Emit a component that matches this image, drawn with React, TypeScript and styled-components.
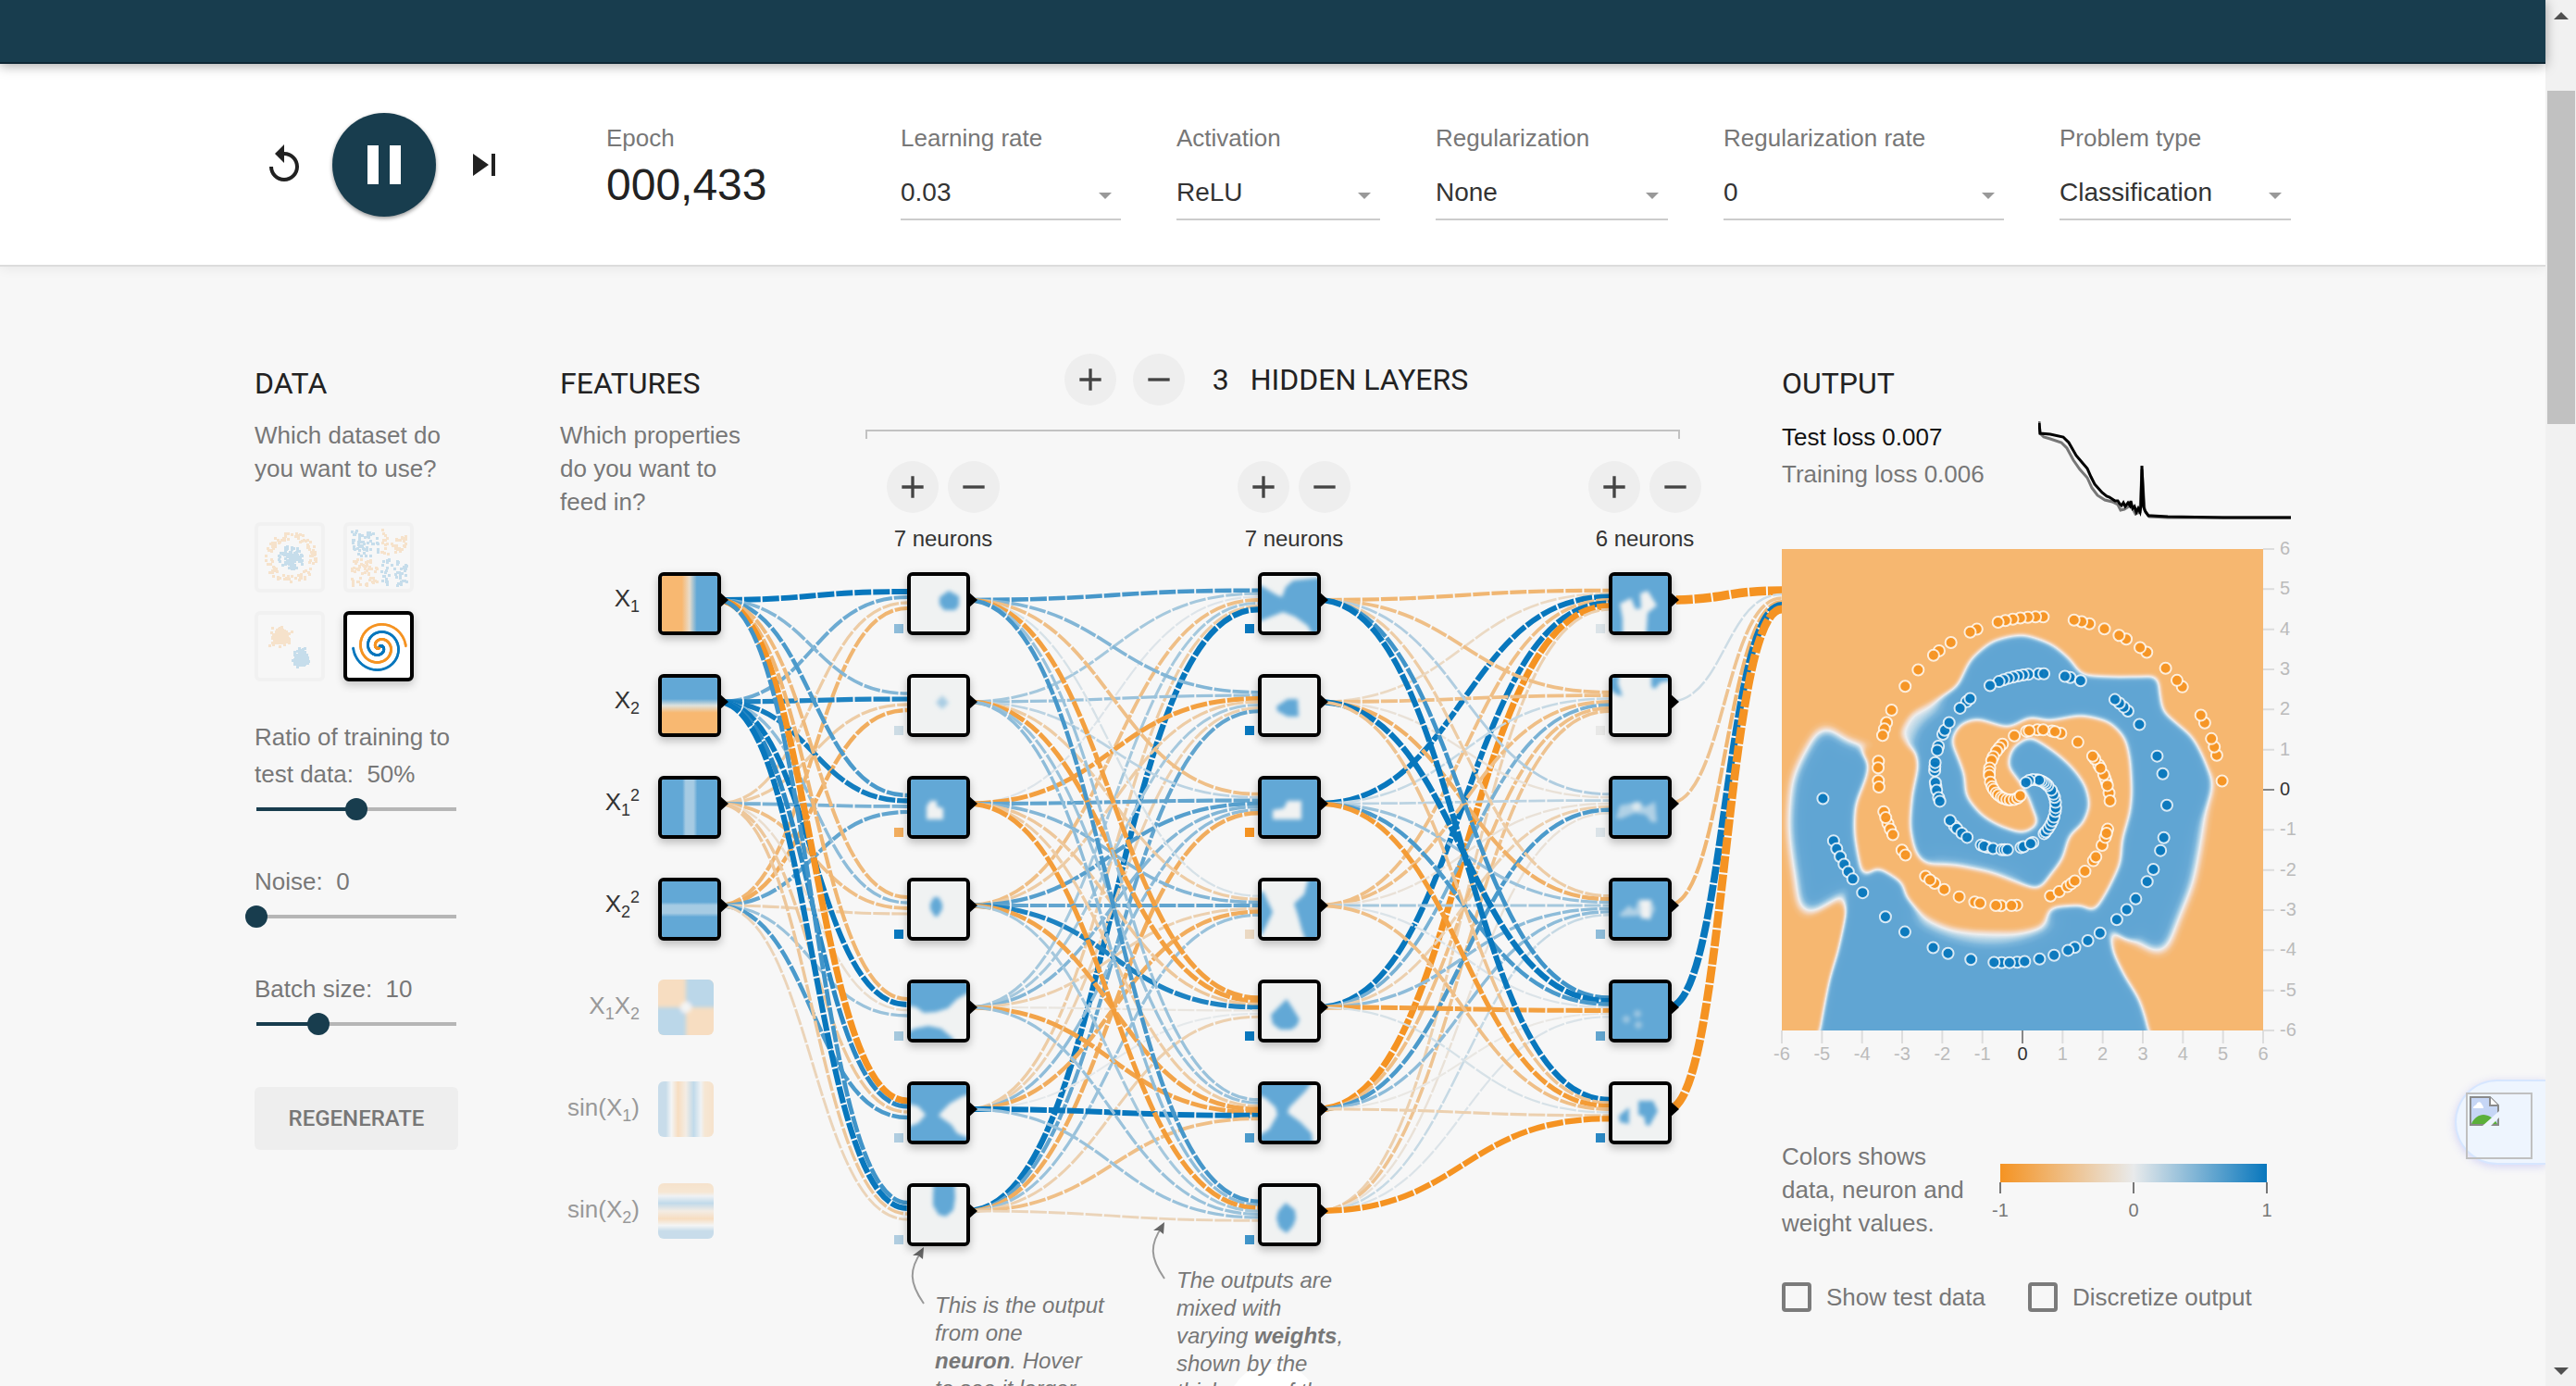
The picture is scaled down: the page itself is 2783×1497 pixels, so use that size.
import React, { useState } from "react";
import styled, { createGlobalStyle } from "styled-components";

const SANS = `"Liberation Sans", Arial, sans-serif`;
const DISPLAY = `Roboto, "Liberation Sans", sans-serif`;
const NAVY = "#183d4e";
const BLUE = "#0877bd";
const ORANGE = "#f59322";
const CELL_BLUE = "#62a8d6";
const CELL_ORANGE = "#f8b871";
const CELL_LIGHT = "#f0f2f2";

const GlobalStyle = createGlobalStyle`
  * { box-sizing: border-box; }
  body { margin: 0; background: #f7f7f7; font-family: ${SANS}; font-size: 26px; color: #222; }
  button, input, select { font: inherit; margin: 0; }
  h2, p { margin: 0; }
`;

/* ---------- page frame ---------- */

const Page = styled.div`
  position: relative;
  display: grid;
  grid-template-columns: minmax(0, 1fr) 33px;
  height: 100vh;
  overflow: hidden;
`;

const Content = styled.div`
  min-width: 0;
`;

const Banner = styled.header`
  position: relative;
  height: 69px;
  background: ${NAVY};
  border-bottom: 2px solid #0e2735;
  box-shadow: 0 2px 12px rgba(0, 0, 0, 0.35);
`;

const Container = styled.div`
  width: 100%;
  max-width: 2200px;
  margin: 0 auto;
`;

const ScrollTrack = styled.div`
  display: flex;
  flex-direction: column;
  align-items: center;
  background: #f1f1f1;
`;

const ScrollArrow = styled.div<{ $down?: boolean }>`
  display: flex;
  align-items: center;
  justify-content: center;
  height: 34px;
  svg {
    transform: ${(p) => (p.$down ? "none" : "rotate(180deg)")};
  }
`;

const ScrollRail = styled.div`
  flex: 1;
  width: 100%;
  padding: 64px 1px 0 2px;
`;

const ScrollThumb = styled.div`
  height: 360px;
  background: #c1c1c1;
`;

/* ---------- toolbar ---------- */

const Toolbar = styled.section`
  background: #fff;
  border-bottom: 2px solid #dcdcdc;
  box-shadow: 0 2px 12px rgba(0, 0, 0, 0.07);
`;

const ToolbarRow = styled(Container)`
  display: flex;
  align-items: flex-start;
  height: 217px;
  padding: 0 0 0 8px;
`;

const Playback = styled.div`
  display: flex;
  align-items: center;
  gap: 28px;
  height: 100%;
  margin-right: 108px;
`;

const IconButton = styled.button`
  width: 48px;
  height: 48px;
  padding: 0;
  border: 0;
  background: none;
  color: #212121;
  cursor: pointer;
  svg {
    display: block;
  }
`;

const PlayButton = styled.button`
  display: flex;
  align-items: center;
  justify-content: center;
  width: 112px;
  height: 112px;
  padding: 0;
  border: 0;
  border-radius: 50%;
  background: ${NAVY};
  color: #fff;
  box-shadow: 0 2px 4px rgba(0, 0, 0, 0.4);
  cursor: pointer;
`;

const Epoch = styled.div`
  display: flex;
  flex-direction: column;
  gap: 5px;
  padding-top: 62px;
`;

const Caption = styled.span`
  color: #777;
  line-height: 36px;
  white-space: nowrap;
`;

const EpochValue = styled.output`
  font-size: 48px;
  line-height: 56px;
  color: #222;
`;

const Selectors = styled.div`
  display: flex;
  gap: 60px;
  margin-left: auto;
  padding-top: 62px;
`;

const Field = styled.label<{ $width: number }>`
  position: relative;
  display: flex;
  flex-direction: column;
  gap: 25px;
  width: ${(p) => p.$width}px;
  &::after {
    content: "";
    position: absolute;
    right: 10px;
    bottom: 23px;
    border: 7px solid transparent;
    border-top-color: #999;
    border-bottom: 0;
    pointer-events: none;
  }
`;

const Select = styled.select`
  appearance: none;
  width: 100%;
  height: 46px;
  padding: 0 0 12px;
  border: 0;
  border-bottom: 2px solid #ccc;
  border-radius: 0;
  background: none;
  color: #333;
  font-size: 28px;
  line-height: 32px;
`;

/* ---------- main area ---------- */

const Main = styled.main`
  padding-top: 94px;
`;

const Columns = styled(Container)`
  display: flex;
  align-items: flex-start;
  justify-content: space-between;
`;

const NetworkAndOutput = styled.div`
  display: flex;
  align-items: flex-start;
`;

const Heading = styled.h2`
  font-family: ${DISPLAY};
  font-size: 32px;
  font-weight: 400;
  line-height: 40px;
  color: #222;
  white-space: nowrap;
`;

const Description = styled.p`
  margin-top: 18px;
  line-height: 36px;
  color: #777;
`;

const DataColumn = styled.section`
  width: 220px;
  padding-top: 12px;
`;

const Datasets = styled.div`
  display: grid;
  grid-template-columns: repeat(2, 76px);
  gap: 20px;
  margin: 40px 0;
`;

const DatasetButton = styled.button<{ $on: boolean }>`
  width: 76px;
  height: 76px;
  padding: 0;
  border: 4px solid ${(p) => (p.$on ? "#000" : "#f1f1f1")};
  border-radius: 6px;
  background: ${(p) => (p.$on ? "#fff" : "transparent")};
  box-shadow: ${(p) => (p.$on ? "0 4px 10px rgba(0,0,0,.2)" : "none")};
  cursor: pointer;
  svg {
    display: block;
    opacity: ${(p) => (p.$on ? 1 : 0.2)};
  }
`;

const SliderField = styled.label`
  display: flex;
  flex-direction: column;
  gap: 6px;
  margin-bottom: 46px;
  color: #777;
  line-height: 40px;
`;

const Slider = styled.input<{ $fill: number }>`
  appearance: none;
  width: 240px;
  height: 24px;
  margin: 0 -10px;
  background: none;
  &::-webkit-slider-runnable-track {
    height: 4px;
    background: linear-gradient(
      to right,
      transparent 12px,
      ${NAVY} 12px,
      ${NAVY} ${(p) => 12 + p.$fill * 216}px,
      #b6b6b6 ${(p) => 12 + p.$fill * 216}px,
      #b6b6b6 228px,
      transparent 228px
    );
  }
  &::-webkit-slider-thumb {
    appearance: none;
    width: 24px;
    height: 24px;
    margin-top: -10px;
    border-radius: 50%;
    background: ${NAVY};
  }
`;

const Regenerate = styled.button`
  width: 100%;
  height: 68px;
  margin-top: 10px;
  border: 0;
  border-radius: 6px;
  background: #eee;
  color: #777;
  font-family: ${DISPLAY};
  font-size: 24px;
  font-weight: 500;
  cursor: pointer;
`;

/* ---------- network ---------- */

const NetworkColumn = styled.section`
  width: 1320px;
`;

const NetworkHeader = styled.div`
  display: flex;
  align-items: flex-start;
  height: 236px;
`;

const FeaturesIntro = styled.div`
  width: 220px;
  margin-right: 110px;
  padding-top: 12px;
`;

const HiddenIntro = styled.div`
  width: 880px;
`;

const HiddenTitle = styled.div`
  display: flex;
  align-items: center;
  justify-content: center;
  gap: 18px;
  padding-right: 14px;
`;

const LayerCount = styled(Heading).attrs({ as: "span" })`
  margin: 0 5px 0 12px;
`;

const RoundButton = styled.button`
  display: flex;
  align-items: center;
  justify-content: center;
  width: 56px;
  height: 56px;
  padding: 0;
  border: 0;
  border-radius: 50%;
  background: #eee;
  color: #444;
  cursor: pointer;
`;

const Bracket = styled.div`
  height: 10px;
  margin-top: 26px;
  border: 2px solid #c2c2c2;
  border-bottom: 0;
`;

const LayerControls = styled.div`
  display: grid;
  grid-template-columns: repeat(3, 122px);
  gap: 257px;
  width: max-content;
  margin: 24px 0 0 23px;
`;

const LayerControl = styled.div`
  display: grid;
  grid-template-columns: 56px 56px;
  gap: 14px 10px;
  font-size: 24px;
  line-height: 28px;
  color: #333;
  span {
    grid-column: 1 / -1;
    text-align: center;
    white-space: nowrap;
  }
`;

const Diagram = styled.div`
  position: relative;
  height: 880px;
`;

const Links = styled.svg`
  position: absolute;
  inset: 0;
  width: 100%;
  height: 100%;
  overflow: visible;
`;

const NodeLayer = styled.div<{ $left: number }>`
  position: absolute;
  top: 0;
  left: ${(p) => p.$left}px;
  display: flex;
  flex-direction: column;
  gap: 42px;
`;

const NodeBox = styled.div<{ $on: boolean }>`
  flex: none;
  width: ${(p) => (p.$on ? 68 : 60)}px;
  height: ${(p) => (p.$on ? 68 : 60)}px;
  border: ${(p) => (p.$on ? "4px solid #000" : "0")};
  border-radius: 6px;
  overflow: hidden;
  background: ${CELL_LIGHT};
  opacity: ${(p) => (p.$on ? 1 : 0.4)};
  box-shadow: ${(p) => (p.$on ? "0 4px 10px rgba(0,0,0,.25)" : "none")};
  svg {
    display: block;
  }
`;

const FeatureRow = styled.div`
  display: flex;
  align-items: flex-start;
  gap: 20px;
  height: 68px;
`;

const FeatureLabel = styled.span<{ $on: boolean }>`
  width: 86px;
  line-height: 56px;
  text-align: right;
  white-space: nowrap;
  color: ${(p) => (p.$on ? "#333" : "#999")};
  sub,
  sup {
    font-size: 18px;
    line-height: 0;
  }
`;

const Callout = styled.p<{ $x: number; $y: number }>`
  position: absolute;
  left: ${(p) => p.$x}px;
  top: ${(p) => p.$y}px;
  width: 183px;
  font-size: 24px;
  font-style: italic;
  line-height: 30px;
  color: #777;
`;

/* ---------- output ---------- */

const OutputColumn = styled.section`
  width: 550px;
  padding-top: 12px;
`;

const LossRow = styled.div`
  display: flex;
  justify-content: space-between;
  height: 141px;
  margin-top: 18px;
  line-height: 40px;
`;

const Loss = styled.div<{ $color: string }>`
  color: ${(p) => p.$color};
  white-space: nowrap;
`;

const Heatmap = styled.svg`
  display: block;
  overflow: visible;
`;

const LegendRow = styled.div`
  display: flex;
  align-items: flex-start;
  gap: 26px;
  margin-top: 78px;
`;

const LegendText = styled.p`
  width: 210px;
  line-height: 36px;
  color: #777;
`;

const LegendScale = styled.svg`
  display: block;
  margin-top: 26px;
  overflow: visible;
`;

const Options = styled.div`
  display: flex;
  gap: 46px;
  margin-top: 44px;
`;

const Option = styled.label`
  display: flex;
  align-items: center;
  gap: 16px;
  line-height: 36px;
  color: #777;
  white-space: nowrap;
`;

const Checkbox = styled.input`
  appearance: none;
  width: 32px;
  height: 32px;
  border: 4px solid #7b7b7b;
  border-radius: 4px;
`;

const Widget = styled.button`
  position: absolute;
  right: 33px;
  top: 1166px;
  width: 98px;
  height: 92px;
  padding: 8px 0 0 10px;
  border: 2px solid #d6e6ff;
  border-right: 0;
  border-radius: 46px 0 0 46px;
  background: #eef5fe;
  box-shadow: 0 2px 10px rgba(90, 90, 240, 0.22);
  clip-path: inset(-20px 0 -20px -20px);
`;

const BrokenImage = styled.span`
  display: block;
  width: 72px;
  height: 72px;
  padding: 2px;
  border: 2px solid #c0c0c0;
  svg {
    display: block;
  }
`;

/* ---------- data ---------- */

const PITCH = 110;
const LAYER_X = [106, 375, 754, 1133];
const OUTPUT_X = 1320;

// weights[layer][target][source]
const WEIGHTS: number[][][] = [
  [
    [1.1, 0.55, -0.35, -0.6],
    [0.45, 0.9, -0.35, -0.7],
    [0.7, 0.95, 0.5, 0.6],
    [-0.55, 0.4, -0.5, -0.3],
    [-0.6, 1.05, -0.15, 0.35],
    [-1.4, 0.85, -0.4, 0.7],
    [0.75, 1.15, -0.4, -0.25],
  ],
  [
    [0.72, 0.3, 0.05, -0.5, 0.3, -0.35, 1.2],
    [0.45, 0.35, -0.85, -0.35, 0.3, -0.3, 0.6],
    [-0.5, 0.2, 0.6, 0.65, 0.45, 0.4, -0.7],
    [0.08, -0.35, 0.45, 0.6, -0.3, -0.7, 0.35],
    [-0.85, -0.85, -0.4, 0.9, -0.06, 0.02, -0.3],
    [0.35, 0.35, -0.35, -0.8, -0.8, 1.1, -0.5],
    [0.72, 0.4, -0.88, 0.3, 0.35, 0.35, -0.25],
  ],
  [
    [-0.6, -0.2, 1.1, -0.5, 1.15, -1.4, -0.3],
    [-0.5, -0.5, 0.15, -0.5, 0.5, -0.5, -0.45],
    [0.25, -0.1, 0.2, -0.1, -0.3, 0.7, -0.1],
    [-0.35, -0.65, 0.35, 0.3, 0.4, 0.4, 0.15],
    [0.75, 1.2, 0.7, 0.06, -0.85, -0.04, 0.06],
    [1.15, -0.45, -0.9, -0.5, 0.08, -0.3, -1.2],
  ],
  [[-2.1, 0.12, -0.45, -0.6, 1.6, -1.9]],
];

const BIASES: number[][] = [
  [0.4, 0.12, -0.7, 1, 0.3, 0.25, 0.25],
  [1, 1, -1, -0.2, 1, 0.7, 0.75],
  [0.06, -0.02, 0.06, 0.4, 0.6, 0.85],
];

const rgb = (hex: string) => [1, 3, 5].map((i) => parseInt(hex.slice(i, i + 2), 16));
const weightColor = (w: number) => {
  const t = Math.min(1, Math.abs(w));
  const from = rgb("#e8eaeb");
  const to = rgb(w < 0 ? ORANGE : BLUE);
  return `rgb(${from.map((v, i) => Math.round(v + (to[i] - v) * t)).join(",")})`;
};

const BLUE_POINTS = [
  249, 244, 243, 242, 241, 240, 239, 237, 233, 230, 226, 224, 221, 217, 215, 218, 216, 214, 212, 210, 207, 208, 205,
  203, 200, 198, 196, 193, 191, 188, 186, 181, 176, 173, 167, 164, 163, 162, 161, 152, 154, 151, 146, 147, 144, 143,
  142, 141, 140, 139, 138, 136, 130, 131, 128, 121, 122, 124, 118, 117, 112, 113, 114, 108, 109, 107, 105, 104, 96, 98,
  95, 93, 91, 86, 84, 85, 82, 79, 78, 77, 72, 71, 67, 68, 61, 60, 58, 56, 54, 52, 49, 47, 44, 41, 39, 36, 32, 30, 28,
  26, 22, 18, 24, 14, 10,
];
const ORANGE_POINTS = [
  249, 246, 245, 244, 242, 241, 237, 236, 234, 231, 230, 228, 227, 225, 223, 222, 221, 217, 216, 215, 214, 213, 212,
  211, 208, 207, 204, 202, 201, 198, 195, 191, 189, 188, 187, 183, 182, 180, 179, 175, 173, 174, 172, 171, 168, 167,
  162, 160, 161, 158, 155, 152, 151, 147, 148, 144, 145, 137, 135, 133, 132, 131, 128, 125, 124, 121, 119, 117, 118,
  108, 110, 105, 104, 106, 103, 100, 101, 98, 97, 91, 85, 82, 83, 77, 79, 73, 74, 68, 62, 60, 58, 55, 53, 49, 47, 45,
  41, 38, 36, 33, 31, 28, 26, 23, 20, 16, 12, 8,
];

const spiral = (i: number, turn: number, unit: number, centre: number) => {
  const r = (i / 250) * 5 * unit;
  const t = (i / 250) * 3.5 * Math.PI + turn;
  return [centre + r * Math.sin(t), centre - r * Math.cos(t)];
};

// Closed Catmull-Rom curve through the given points.
const smooth = (pts: number[][]) => {
  const n = pts.length;
  const at = (i: number) => pts[(i + n) % n];
  let d = `M${pts[0].join(",")}`;
  for (let i = 0; i < n; i++) {
    const [a, b, c, e] = [at(i - 1), at(i), at(i + 1), at(i + 2)];
    d += `C${b[0] + (c[0] - a[0]) / 8},${b[1] + (c[1] - a[1]) / 8} ${c[0] - (e[0] - b[0]) / 8},${c[1] - (e[1] - b[1]) / 8} ${c[0]},${c[1]}`;
  }
  return d + "Z";
};

// Upper arm, core and the wedge that runs off the bottom edge.
const BODY = [
  [134, 219], [128, 200], [140, 178], [165, 163], [189, 148], [204, 120], [228, 100], [260, 93], [291, 103],
  [311, 119], [325, 135], [355, 138], [386, 138], [405, 139], [409, 160], [414, 177], [442, 202], [456, 227],
  [461, 250], [454, 276], [440, 300], [426, 330], [412, 360], [396, 390], [380, 419], [356, 410], [358, 434],
  [370, 460], [386, 487], [396, 520], [404, 580], [32, 580], [41, 520], [50, 467], [60, 434], [67, 400], [70, 370],
  [84, 344], [120, 300],
];
const LEFT_ARM = [
  [45, 192], [72, 208], [97, 217], [110, 260], [110, 330], [88, 366], [62, 376], [24, 394], [14, 350], [8, 300],
  [12, 250], [26, 218],
];
const RIGHT_ARM = [
  [400, 240], [462, 246], [458, 280], [452, 320], [444, 360], [430, 396], [412, 436], [384, 424], [354, 406], [380, 340],
];
const SPIRAL = [
  [88, 215], [94, 232], [91, 247], [80, 277], [79, 310], [88, 351], [104, 345], [129, 360], [135, 376], [153, 394],
  [181, 407], [212, 412], [252, 412], [280, 405], [291, 388], [323, 385], [337, 390], [351, 370], [365, 340],
  [368, 314], [376, 284], [378, 260], [376, 227], [370, 204], [353, 187], [323, 180], [290, 185], [268, 182],
  [244, 192], [212, 184], [193, 190], [184, 207], [191, 227], [197, 244], [200, 267], [216, 287], [236, 299],
  [260, 306], [276, 297], [272, 283], [266, 267], [256, 250], [245, 234], [250, 215], [268, 204], [287, 214],
  [303, 226], [317, 240], [328, 257], [332, 277], [325, 296], [311, 310], [303, 334], [290, 352], [277, 366],
  [252, 360], [224, 350], [189, 343], [157, 340], [145, 327], [139, 300], [141, 267], [147, 234], [141, 217],
  [118, 214],
];
const toPath = (pts: number[][], close = false) => "M" + pts.map((p) => p.join(",")).join("L") + (close ? "Z" : "");

const TEST_LOSS: number[][] = [
  [1, 5], [2, 16], [13, 17], [27, 20], [33, 26], [41, 40], [47, 47], [53, 54], [57, 63], [61, 71], [69, 80], [74, 84],
  [77, 85], [83, 89], [86, 89], [88, 92], [90, 94], [92, 91], [94, 95], [97, 91], [99, 94], [100, 89], [102, 97],
  [104, 95], [106, 101], [108, 97], [110, 101], [111, 94], [112, 51], [114, 96], [116, 101], [119, 105], [122, 105],
  [140, 106], [200, 107], [273, 107],
];
const TRAIN_LOSS: number[][] = [
  [1, 3], [2, 16], [6, 20], [13, 22], [25, 26], [31, 32], [38, 45], [45, 55], [53, 64], [58, 75], [64, 83], [72, 88],
  [80, 90], [86, 93], [89, 99], [93, 98], [98, 95], [101, 95], [105, 103], [110, 101], [112, 55], [115, 99], [120, 106],
  [140, 107], [200, 107], [273, 107],
];

const makeRandom = (seed: number) => () => {
  seed = (seed * 16807) % 2147483647;
  return seed / 2147483647;
};

type Dot = [number, number, string];
const datasetDots: Record<string, Dot[]> = (() => {
  const rnd = makeRandom(4321);
  const gauss = () => rnd() + rnd() + rnd() + rnd() - 2;
  const circle: Dot[] = [];
  const xor: Dot[] = [];
  const clusters: Dot[] = [];
  const spirals: Dot[] = [];
  for (let i = 0; i < 110; i++) {
    const a = rnd() * Math.PI * 2;
    const r = 20 + rnd() * 8;
    circle.push([34 + r * Math.sin(a), 33 + r * Math.cos(a), ORANGE]);
    const b = rnd() * Math.PI * 2;
    const q = rnd() * 14;
    circle.push([34 + q * Math.sin(b), 33 + q * Math.cos(b), BLUE]);
  }
  for (let i = 0; i < 200; i++) {
    const x = (rnd() * 28 + 2) * (rnd() < 0.5 ? -1 : 1);
    const y = (rnd() * 28 + 2) * (rnd() < 0.5 ? -1 : 1);
    xor.push([34 + x, 33 + y, x * y > 0 ? BLUE : ORANGE]);
  }
  for (let i = 0; i < 200; i++) {
    clusters.push([23 + gauss() * 7, 22 + gauss() * 7, ORANGE]);
    clusters.push([45 + gauss() * 6, 46 + gauss() * 7, BLUE]);
  }
  for (let i = 0; i < 250; i++) {
    const [bx, by] = spiral(i, 0, 5.7, 35);
    const [ox, oy] = spiral(i, Math.PI, 5.7, 35);
    spirals.push([bx, by, BLUE], [ox, oy, ORANGE]);
  }
  return { Circle: circle, "Exclusive or": xor, Gaussian: clusters, Spiral: spirals };
})();

/* ---------- drawings ---------- */

const Glyph = ({ size, d }: { size: number; d: string }) => (
  <svg width={size} height={size} viewBox="0 0 24 24" fill="currentColor" aria-hidden="true">
    <path d={d} />
  </svg>
);
const ICONS = {
  replay: "M12 5V1L7 6l5 5V7c3.31 0 6 2.69 6 6s-2.69 6-6 6-6-2.69-6-6H4c0 4.42 3.58 8 8 8s8-3.58 8-8-3.58-8-8-8z",
  pause: "M6 19h4V5H6v14zm8-14v14h4V5h-4z",
  next: "M6 18l8.5-6L6 6v12zM16 6v12h2V6h-2z",
  add: "M19 13h-6v6h-2v-6H5v-2h6V5h2v6h6v2z",
  remove: "M19 13H5v-2h14v2z",
};

const DefsHolder = styled.svg`
  position: absolute;
  width: 0;
  height: 0;
`;

const MapBlur = ({ id, amount }: { id: string; amount: number }) => (
  <filter id={id} filterUnits="userSpaceOnUse" x="-60" y="-60" width="640" height="700">
    <feGaussianBlur stdDeviation={amount} />
  </filter>
);

const SharedDefs = () => (
  <DefsHolder aria-hidden="true">
    <defs>
      <filter id="soft" filterUnits="userSpaceOnUse" x="-12" y="-12" width="84" height="84">
        <feGaussianBlur stdDeviation="2" />
      </filter>
      <MapBlur id="edge" amount={5} />
      <MapBlur id="inner-edge" amount={5} />
      <MapBlur id="haze" amount={9} />
      <filter
        id="ramp"
        filterUnits="userSpaceOnUse"
        x="0"
        y="0"
        width="520"
        height="520"
        colorInterpolationFilters="sRGB"
      >
        <feComponentTransfer>
          <feFuncR type="table" tableValues="0.965 0.965 0.962 0.958 0.93 0.68 0.48 0.4 0.38" />
          <feFuncG type="table" tableValues="0.718 0.72 0.75 0.83 0.935 0.82 0.71 0.66 0.65" />
          <feFuncB type="table" tableValues="0.44 0.445 0.52 0.72 0.94 0.9 0.86 0.835 0.83" />
        </feComponentTransfer>
      </filter>
    </defs>
  </DefsHolder>
);

const Cell = ({ blue, children }: { blue?: boolean; children: React.ReactNode }) => (
  <svg width="60" height="60" viewBox="0 0 60 60">
    <rect width="60" height="60" fill={blue ? CELL_BLUE : CELL_LIGHT} />
    <g filter="url(#soft)" fill={blue ? CELL_LIGHT : CELL_BLUE}>
      {children}
    </g>
  </svg>
);

const HIDDEN_CELLS: React.ReactNode[][] = [
  [
    <Cell><path d="M41 16L52 22 52 32 48 37 36 37 31 31 31 23Z" /></Cell>,
    <Cell><path d="M34 19L41 27 34 34 27 27Z" opacity=".5" /></Cell>,
    <Cell blue><path d="M17 29L21 23 28 23 28 29 35 31V43H17Z" /></Cell>,
    <Cell><path d="M25 17H30L34 24 34 30 29 38H26L21 30V24Z" /></Cell>,
    <Cell><path d="M-9 -9H70V6L50 17 40 27 27 31 14 32 6 26 -9 23ZM-9 56L4 49 19 46 33 49 46 60 46 70H-9Z" /></Cell>,
    <Cell blue><path d="M-9 16L0 21 8 23 16 32 8 41 0 44 -9 48ZM70 8L56 12 42 20 33 29 30 33 44 43 50 52 70 60Z" /></Cell>,
    <Cell><path d="M25 -9H47L48 12 46 25 38 32 30 30 24 20 24 10Z" /></Cell>,
  ],
  [
    <Cell><path d="M-9 8L2 12 15 20 22 23 26 12 34 5 70 1V70H58L50 54 36 44 23 39 8 45 -9 52Z" /></Cell>,
    <Cell><path d="M28 23H39L40 42H28L17 36 16 31Z" /></Cell>,
    <Cell blue><path d="M12 33L24 31 28 23H43V43H12Z" /></Cell>,
    <Cell><path d="M-9 11H2L7 22 12 33 6 46 0 58 -9 60ZM52 -9L46 14 35 24 39 36 44 54 50 70H70V-9Z" /></Cell>,
    <Cell><path d="M27 17L33 26 41 39 38 46 32 50 20 50 12 44 10 34 18 26Z" /></Cell>,
    <Cell blue><path d="M-9 8L4 14 15 24 17 32 8 48 -9 58ZM70 -9H58L48 6 30 24 28 30 42 40 54 52 56 70H70Z" /></Cell>,
    <Cell><path d="M26 17L36 25 37 34 34 42 27 50 19 44 16 34 18 26Z" /></Cell>,
  ],
  [
    <Cell blue><path d="M11 70L11 46 8 30 20 24 25 36 31 35 30 19 38 16 48 32 38 40 36 70Z" /></Cell>,
    <Cell><path d="M-9 -9H8L6 6 11 20 4 18 -9 8ZM42 -9V10L46 12 52 5 70 2V-9Z" /></Cell>,
    <Cell blue>
      <path d="M4 42L8 28 30 24 34 30 46 24 48 46 42 46 36 38 24 36 10 42Z" opacity=".55" />
      <circle cx="26" cy="29" r="5" opacity=".7" />
    </Cell>,
    <Cell blue>
      <path d="M7 36L18 26 24 31 28 20H42L46 30 40 42 30 37 10 38Z" opacity=".55" />
      <path d="M30 20H41V40H31Z" />
    </Cell>,
    <Cell blue><g opacity=".4"><circle cx="15" cy="39" r="4" /><circle cx="27" cy="33" r="4" /><circle cx="28" cy="45" r="4" /></g></Cell>,
    <Cell><path d="M18 24V42L8 40 7 33ZM28 17H44L49 28 40 44 36 43 34 34 28 32Z" /></Cell>,
  ],
];

const SIN_STOPS: [number, string][] = [
  [0, "#84b6d8"], [0.14, "#84b6d8"], [0.24, "#f0f2f2"], [0.36, CELL_ORANGE], [0.5, "#f0ddc8"], [0.64, "#72b0d8"],
  [0.77, "#e4ebf0"], [0.84, "#f6d0a2"], [1, "#f6c48c"],
];

const Gradient = ({ id, vertical, stops }: { id: string; vertical?: boolean; stops: [number, string][] }) => (
  <svg width="60" height="60" viewBox="0 0 60 60">
    <defs>
      <linearGradient id={id} x1="0" y1="0" x2={vertical ? 0 : 1} y2={vertical ? 1 : 0}>
        {stops.map(([o, c], i) => (
          <stop key={i} offset={o} stopColor={c} />
        ))}
      </linearGradient>
    </defs>
    <rect width="60" height="60" fill={`url(#${id})`} />
  </svg>
);

const BAND: [number, string][] = [[0.37, CELL_BLUE], [0.43, "#a6cbe3"], [0.57, "#a6cbe3"], [0.64, CELL_BLUE]];

const FEATURES: { name: string; on: boolean; label: React.ReactNode; cell: React.ReactNode }[] = [
  {
    name: "x1", on: true, label: <>X<sub>1</sub></>,
    cell: <Gradient id="f-x1" stops={[[0.36, CELL_ORANGE], [0.5, "#e8dccb"], [0.63, CELL_BLUE]]} />,
  },
  {
    name: "x2", on: true, label: <>X<sub>2</sub></>,
    cell: <Gradient id="f-x2" vertical stops={[[0.38, CELL_BLUE], [0.5, "#dfe2dd"], [0.63, CELL_ORANGE]]} />,
  },
  { name: "x1sq", on: true, label: <>X<sub>1</sub><sup>2</sup></>, cell: <Gradient id="f-x1sq" stops={BAND} /> },
  { name: "x2sq", on: true, label: <>X<sub>2</sub><sup>2</sup></>, cell: <Gradient id="f-x2sq" vertical stops={BAND} /> },
  {
    name: "x1x2", on: false, label: <>X<sub>1</sub>X<sub>2</sub></>,
    cell: (
      <svg width="60" height="60" viewBox="0 0 60 60">
        <rect width="60" height="60" fill={CELL_ORANGE} />
        <g filter="url(#soft)">
          <path d="M30 -9H70V30H30ZM-9 30H30V70H-9Z" fill={CELL_BLUE} />
          <circle cx="30" cy="30" r="6" fill={CELL_LIGHT} />
        </g>
      </svg>
    ),
  },
  { name: "sin1", on: false, label: <>sin(X<sub>1</sub>)</>, cell: <Gradient id="f-sin1" stops={SIN_STOPS} /> },
  {
    name: "sin2", on: false, label: <>sin(X<sub>2</sub>)</>,
    cell: <Gradient id="f-sin2" vertical stops={SIN_STOPS.map(([o, c]) => [1 - o, c] as [number, string]).reverse()} />,
  },
];

const NetworkLinks = () => (
  <Links aria-hidden="true">
    {WEIGHTS.map((targets, layer) =>
      targets.map((sources, t) =>
        sources.map((w, s) => {
          const x1 = LAYER_X[layer] + 64;
          const y1 = 30 + s * PITCH;
          const x2 = layer === 3 ? OUTPUT_X : LAYER_X[layer + 1];
          const y2 = 30 + t * PITCH + ((s - (sources.length - 1) / 2) / sources.length) * 24;
          const mid = (x1 + x2) / 2;
          return (
            <path
              key={`${layer}-${t}-${s}`}
              d={`M${x1},${y1}C${mid},${y1} ${mid},${y2} ${x2},${y2}`}
              fill="none"
              stroke={weightColor(w)}
              strokeWidth={2 + 3.6 * Math.abs(w)}
              strokeDasharray="18 2"
              strokeDashoffset={-8.67}
            />
          );
        })
      )
    )}
    {BIASES.map((layer, l) =>
      layer.map((b, i) => (
        <rect key={`${l}-${i}`} x={LAYER_X[l + 1] - 14} y={56 + i * PITCH} width="10" height="10" fill={weightColor(b)} />
      ))
    )}
    {[4, 7, 7, 6].map((count, l) =>
      Array.from({ length: count }, (_, i) => {
        const x = LAYER_X[l] + 66;
        const y = 30 + i * PITCH;
        return <path key={`${l}-${i}`} d={`M${x},${y - 9}L${x + 10},${y}L${x},${y + 9}Z`} />;
      })
    )}
    <circle cx="771" cy="905" r="50" fill="#fff" />
    {[[381, 729], [641, 702]].map(([x, y]) => (
      <g key={x} transform={`translate(${x - 12} ${y})`}>
        <path d="M24,61C8,38 8,24 22,4" fill="none" stroke="#999" strokeWidth="2" />
        <path d="M24,0L23,13L18,9L12,9Z" fill="#666" />
      </g>
    ))}
  </Links>
);

const AXIS = [-6, -5, -4, -3, -2, -1, 0, 1, 2, 3, 4, 5, 6];

const OutputMap = () => (
  <Heatmap width="520" height="560" viewBox="0 0 520 560" role="img" aria-label="Network output">
    <svg width="520" height="520">
      <g filter="url(#ramp)">
        <rect width="520" height="520" fill="#000" />
        <path d={smooth(LEFT_ARM)} fill="#fff" filter="url(#haze)" />
        <path d={smooth(RIGHT_ARM)} fill="#fff" filter="url(#haze)" />
        <path d={smooth(BODY)} fill="#fff" filter="url(#edge)" />
        <path d="M30,405L67,385L56,430L34,520L-20,520L-20,430Z" fill="#000" filter="url(#inner-edge)" />
        <path d={smooth(SPIRAL)} fill="#000" filter="url(#inner-edge)" />
        <g filter="url(#haze)" fill="none" stroke="#000" strokeLinecap="round">
          <path d="M150,396C200,426 250,424 286,402" strokeWidth="14" strokeOpacity=".7" />
          <path d="M134,216C130,196 144,180 168,166" strokeWidth="14" strokeOpacity=".7" />
          <path d="M160,338C200,340 230,348 256,360" strokeWidth="8" strokeOpacity=".6" />
        </g>
      </g>
    </svg>
    <g stroke="#fff" strokeOpacity=".8" strokeWidth="2" fillOpacity=".95">
      {ORANGE_POINTS.map((i) => {
        const [x, y] = spiral(i, Math.PI, 43.333, 260);
        return <circle key={`o${i}`} cx={x} cy={y} r="6" fill={ORANGE} />;
      })}
      {BLUE_POINTS.map((i) => {
        const [x, y] = spiral(i, 0, 43.333, 260);
        return <circle key={`b${i}`} cx={x} cy={y} r="6" fill={BLUE} />;
      })}
    </g>
    <g fontFamily={SANS} fontSize="20">
      {AXIS.map((v) => {
        const p = ((v + 6) / 12) * 520;
        const fill = v === 0 ? "#333" : "#bbb";
        const stroke = v === 0 ? "#888" : "#ddd";
        return (
          <g key={v} fill={fill} stroke="none">
            <path d={`M${p},520v14M520,${520 - p}h12`} stroke={stroke} strokeWidth="2" />
            <text x={p} y="552" textAnchor="middle">{v}</text>
            <text x="538" y={526 - p}>{v}</text>
          </g>
        );
      })}
    </g>
  </Heatmap>
);

/* ---------- page ---------- */

const SELECTS = [
  { label: "Learning rate", value: "0.03", width: 238 },
  { label: "Activation", value: "ReLU", width: 220 },
  { label: "Regularization", value: "None", width: 251 },
  { label: "Regularization rate", value: "0", width: 303 },
  { label: "Problem type", value: "Classification", width: 250 },
];

const PlusMinus = ({ what }: { what: string }) => (
  <>
    <RoundButton aria-label={`Add ${what}`}><Glyph size={40} d={ICONS.add} /></RoundButton>
    <RoundButton aria-label={`Remove ${what}`}><Glyph size={40} d={ICONS.remove} /></RoundButton>
  </>
);

const RangeControl = ({ label, unit = "", min, max, initial }: {
  label: string; unit?: string; min: number; max: number; initial: number;
}) => {
  const [value, setValue] = useState(initial);
  return (
    <SliderField>
      {`${label}:\u00a0 ${value}${unit}`}
      <Slider
        type="range"
        min={min}
        max={max}
        value={value}
        $fill={(value - min) / (max - min)}
        onChange={(e) => setValue(Number(e.target.value))}
      />
    </SliderField>
  );
};

export default function App() {
  const [dataset, setDataset] = useState("Spiral");
  return (
    <Page>
      <GlobalStyle />
      <SharedDefs />
      <Content>
        <Banner />
        <Toolbar>
          <ToolbarRow>
            <Playback>
              <IconButton aria-label="Reset"><Glyph size={48} d={ICONS.replay} /></IconButton>
              <PlayButton aria-label="Pause"><Glyph size={72} d={ICONS.pause} /></PlayButton>
              <IconButton aria-label="Step"><Glyph size={48} d={ICONS.next} /></IconButton>
            </Playback>
            <Epoch>
              <Caption>Epoch</Caption>
              <EpochValue>000,433</EpochValue>
            </Epoch>
            <Selectors>
              {SELECTS.map((s) => (
                <Field key={s.label} $width={s.width}>
                  <Caption>{s.label}</Caption>
                  <Select defaultValue={s.value}>
                    <option>{s.value}</option>
                  </Select>
                </Field>
              ))}
            </Selectors>
          </ToolbarRow>
        </Toolbar>

        <Main>
          <Columns>
            <DataColumn>
              <Heading>DATA</Heading>
              <Description>Which dataset do you want to use?</Description>
              <Datasets>
                {Object.entries(datasetDots).map(([name, dots]) => (
                  <DatasetButton key={name} aria-label={name} $on={name === dataset} onClick={() => setDataset(name)}>
                    <svg width="68" height="68" viewBox="0 0 68 68">
                      {dots.map(([x, y, fill], i) =>
                        name === "Spiral" ? (
                          <circle key={i} cx={x} cy={y} r="1.4" fill={fill} />
                        ) : (
                          <rect key={i} x={Math.round(x)} y={Math.round(y)} width="3" height="3" fill={fill} />
                        )
                      )}
                    </svg>
                  </DatasetButton>
                ))}
              </Datasets>
              <RangeControl label="Ratio of training to test data" unit="%" min={10} max={90} initial={50} />
              <RangeControl label="Noise" min={0} max={50} initial={0} />
              <RangeControl label="Batch size" min={1} max={30} initial={10} />
              <Regenerate>REGENERATE</Regenerate>
            </DataColumn>

            <NetworkAndOutput>
              <NetworkColumn>
                <NetworkHeader>
                  <FeaturesIntro>
                    <Heading>FEATURES</Heading>
                    <Description>Which properties do you want to feed in?</Description>
                  </FeaturesIntro>
                  <HiddenIntro>
                    <HiddenTitle>
                      <PlusMinus what="layer" />
                      <LayerCount>3</LayerCount>
                      <Heading>HIDDEN LAYERS</Heading>
                    </HiddenTitle>
                    <Bracket />
                    <LayerControls>
                      {[7, 7, 6].map((n, i) => (
                        <LayerControl key={i}>
                          <PlusMinus what="neuron" />
                          <span>{`${n} neurons`}</span>
                        </LayerControl>
                      ))}
                    </LayerControls>
                  </HiddenIntro>
                </NetworkHeader>
                <Diagram>
                  <NetworkLinks />
                  <NodeLayer $left={0}>
                    {FEATURES.map((f) => (
                      <FeatureRow key={f.name}>
                        <FeatureLabel $on={f.on}>{f.label}</FeatureLabel>
                        <NodeBox $on={f.on}>{f.cell}</NodeBox>
                      </FeatureRow>
                    ))}
                  </NodeLayer>
                  {HIDDEN_CELLS.map((cells, l) => (
                    <NodeLayer key={l} $left={LAYER_X[l + 1]}>
                      {cells.map((cell, i) => (
                        <NodeBox key={i} $on>{cell}</NodeBox>
                      ))}
                    </NodeLayer>
                  ))}
                  <Callout $x={405} $y={777}>
                    This is the output from one <b>neuron</b>. Hover to see it larger.
                  </Callout>
                  <Callout $x={666} $y={750}>
                    The outputs are mixed with varying <b>weights</b>, shown by the thickness of the lines.
                  </Callout>
                </Diagram>
              </NetworkColumn>

              <OutputColumn>
                <Heading>OUTPUT</Heading>
                <LossRow>
                  <div>
                    <Loss $color="#111">Test loss 0.007</Loss>
                    <Loss $color="#777">Training loss 0.006</Loss>
                  </div>
                  <svg width="273" height="120" viewBox="0 0 273 120" fill="none" strokeWidth="3" aria-hidden="true">
                    <path d={toPath(TRAIN_LOSS)} stroke="#777" />
                    <path d={toPath(TEST_LOSS)} stroke="#000" />
                  </svg>
                </LossRow>
                <OutputMap />
                <LegendRow>
                  <LegendText>Colors shows data, neuron and weight values.</LegendText>
                  <LegendScale width="288" height="60" viewBox="0 0 288 60">
                    <defs>
                      <linearGradient id="legend">
                        <stop offset="0" stopColor={ORANGE} />
                        <stop offset=".5" stopColor="#e8eaeb" />
                        <stop offset="1" stopColor={BLUE} />
                      </linearGradient>
                    </defs>
                    <rect width="288" height="20" fill="url(#legend)" />
                    <path d="M0,20v12M144,20v12M288,20v12" stroke="#777" strokeWidth="2" />
                    <g fontFamily={SANS} fontSize="20" fill="#777" textAnchor="middle">
                      <text x="0" y="57">-1</text>
                      <text x="144" y="57">0</text>
                      <text x="288" y="57">1</text>
                    </g>
                  </LegendScale>
                </LegendRow>
                <Options>
                  <Option><Checkbox type="checkbox" />Show test data</Option>
                  <Option><Checkbox type="checkbox" />Discretize output</Option>
                </Options>
              </OutputColumn>
            </NetworkAndOutput>
          </Columns>
        </Main>
      </Content>

      <ScrollTrack aria-hidden="true">
        <ScrollArrow><svg width="16" height="8"><path d="M0,0H16L8,8Z" fill="#505050" /></svg></ScrollArrow>
        <ScrollRail><ScrollThumb /></ScrollRail>
        <ScrollArrow $down><svg width="16" height="8"><path d="M0,0H16L8,8Z" fill="#505050" /></svg></ScrollArrow>
      </ScrollTrack>

      <Widget aria-label="Assistant">
        <BrokenImage>
          <svg width="32" height="32" viewBox="0 0 16 16">
            <path d="M.5.5H11l4.500 4.500V15.500H.5Z" fill="#c6d6f5" stroke="#8a8a8a" />
            <path d="M11 .5V5h4.500" fill="#fff" stroke="#8a8a8a" />
            <path d="M2 6.500C2 5 3.500 5 3.800 4.200 4.500 2.800 6 2.800 6.500 4.200 7 5 7.500 5.200 7.500 6.500Z" fill="#fff" />
            <path d="M1 15C2 12 5 10 7.500 10S13.500 12 15 15Z" fill="#5bb03a" />
            <path d="M7 16L16 8V11.500L11.500 16Z" fill="#eef5fe" />
          </svg>
        </BrokenImage>
      </Widget>
    </Page>
  );
}
